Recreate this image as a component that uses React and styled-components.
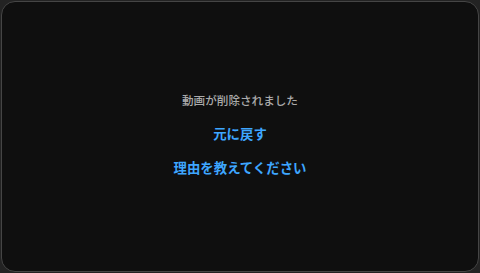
import React from "react";
import styled, { createGlobalStyle } from "styled-components";

const Global = createGlobalStyle`
  html, body { margin: 0; padding: 0; background: #232323; }
  body { font-family: "Noto Sans CJK JP", "Noto Sans", sans-serif; }
  #root { width: 480px; height: 273px; }
`;

const Card = styled.div`
  box-sizing: border-box;
  margin: 1px;
  width: 478px;
  height: 271px;
  border: 1px solid #454545;
  border-radius: 14px;
  background: #0f0f0f;
  display: flex;
  flex-direction: column;
  align-items: center;
  justify-content: center;
  gap: 14px;
  padding-bottom: 5px;
`;

const Message = styled.div`
  color: #aaaaaa;
  font-size: 11.6px;
  font-weight: 500;
  line-height: 18px;
  margin-bottom: 0px;
`;

const LinkButton = styled.button`
  background: none;
  border: none;
  padding: 0;
  font-family: inherit;
  color: #3ea6ff;
  font-size: 13.4px;
  font-weight: 700;
  line-height: 20px;
  cursor: pointer;
`;

export default function App() {
  return (
    <>
      <Global />
      <Card>
        <Message>動画が削除されました</Message>
        <LinkButton>元に戻す</LinkButton>
        <LinkButton>理由を教えてください</LinkButton>
      </Card>
    </>
  );
}
